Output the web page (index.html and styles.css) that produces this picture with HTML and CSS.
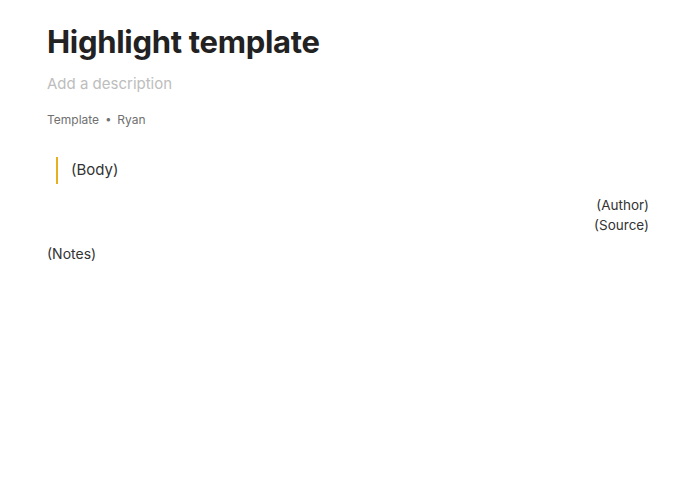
FILE: index.html
```html
<!DOCTYPE html>
<html lang="en">
<head>
  <title>Highlight template</title>
  <link rel="stylesheet" href="styles.css">
</head>
<body>
  <div class="page">
    <h1 class="title">Highlight template</h1>
    <div class="description">Add a description</div>
    <div class="meta">
      <span>Template</span>
      <span class="dot">•</span>
      <span>Ryan</span>
    </div>

    <blockquote class="highlight">(Body)</blockquote>

    <div class="attribution">
      <div>(Author)</div>
      <div>(Source)</div>
    </div>

    <p class="notes">(Notes)</p>
  </div>
</body>
</html>
```

FILE: styles.css
```css
body {
  font-family: Inter, 'Noto Sans', sans-serif;
  margin: 0;
  background: #ffffff;
  color: #2b2b2b;
}

.page {
  padding: 22px 41px 0 47px;
}

.title {
  font-size: 31px;
  font-weight: 700;
  color: #222222;
  margin: 0;
  line-height: 40px;
  letter-spacing: -0.3px;
}

.description {
  font-size: 15px;
  color: #bdbdbd;
  margin-top: 12px;
  line-height: 20px;
}

.meta {
  font-size: 12px;
  color: #707070;
  margin-top: 18px;
  line-height: 16px;
  display: flex;
  align-items: center;
  gap: 6px;
}

.dot {
  font-size: 11px;
  position: relative;
  top: -1px;
}

.highlight {
  margin: 29px 0 0 9px;
  padding: 2px 0 3px 13px;
  border-left: 2px solid #e8b021;
  font-size: 15px;
  line-height: 22px;
  color: #333333;
}

.attribution {
  margin-top: 11px;
  text-align: right;
  font-size: 13.5px;
  line-height: 20px;
  color: #333333;
}

.notes {
  margin: 8px 0 0;
  font-size: 14px;
  line-height: 21px;
  color: #333333;
}
```
